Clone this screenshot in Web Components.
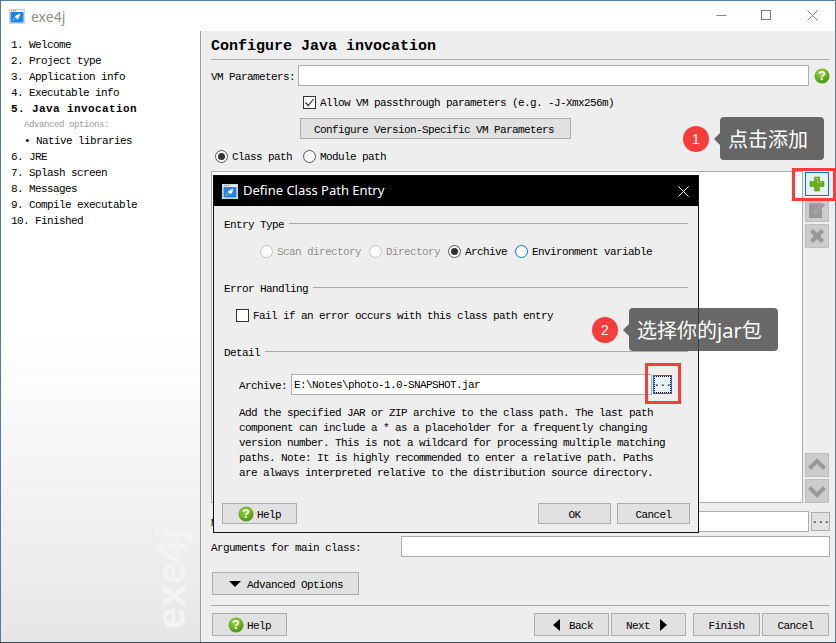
<!DOCTYPE html>
<html><head><meta charset="utf-8"><title>exe4j</title>
<style>
html,body{margin:0;padding:0;width:836px;height:643px;overflow:hidden;background:#3c4a52}
body{position:relative;font:11px/16px "Liberation Mono","Noto Sans CJK SC",monospace;letter-spacing:-.6px;color:#000}
</style></head><body>
<x-app>
  <x-titlebar slot="title">exe4j</x-titlebar>
  <x-sidebar slot="side"></x-sidebar>
  <x-config slot="main"></x-config>
</x-app>
<x-dialog></x-dialog>
<x-highlight style="left:792px;top:168px;width:44px;height:33px"></x-highlight>
<x-highlight style="left:645px;top:363px;width:36px;height:41px"></x-highlight>
<x-callout n="1" style="left:683px;top:117px;width:141px">点击添加</x-callout>
<x-callout n="2" style="left:592px;top:308px;width:186px">选择你的jar包</x-callout>
<script>
const ICONS={
 app:`<svg width="16" height="15" viewBox="0 0 16 15"><rect x=".5" y=".5" width="15" height="14" fill="#e8eef5" stroke="#cfd6dd"/><rect x="1.5" y="3" width="13" height="10.5" fill="#1c86e6"/><path d="M2 1.700h1M4 1.700h1M6 1.700h1" stroke="#e85a3c"/><path d="M11.500 4.500L7 6.500 5.500 8.500l2 .3.3 2 2-1.600z" fill="#fff"/><path d="M5.500 9.500L4 11.500" stroke="#cfe6fb"/></svg>`,
 help:`<svg width="16" height="16" viewBox="0 0 16 16"><defs><radialGradient id="g" cx=".4" cy=".3" r=".8"><stop offset="0" stop-color="#9bd13a"/><stop offset="1" stop-color="#3f8f10"/></radialGradient></defs><circle cx="8" cy="8" r="7.500" fill="url(#g)"/><text x="8" y="12.400" text-anchor="middle" font-family="Liberation Sans" font-weight="700" font-size="13" fill="#fff" style="letter-spacing:0">?</text></svg>`,
 plus:`<svg width="16" height="16" viewBox="0 0 16 16"><path d="M5.500 1h5v4.500H15v5h-4.500V15h-5v-4.500H1v-5h4.500z" fill="#6eb01e" stroke="#4f8f12" stroke-width=".6"/><path d="M6.500 2h2v4.500h5" fill="none" stroke="#9ad04a"/></svg>`,
 edit:`<svg width="18" height="18" viewBox="0 0 18 18"><rect x="1" y="2" width="13" height="15" fill="#999"/><path d="M2 1.500v2M4 1.500v2M6 1.500v2M8 1.500v2M10 1.500v2M12 1.500v2" stroke="#aaa"/><path d="M6 13l1-3 8-8 2 2-8 8z" fill="#9c9c9c" stroke="#b4b4b4" stroke-width=".7"/></svg>`,
 del:`<svg width="18" height="18" viewBox="0 0 18 18"><path d="M2.500 5L5 2.500l4 4 4-4L15.500 5l-4 4 4 4-2.500 2.500-4-4-4 4L2.500 13l4-4z" fill="#999" stroke="#8c8c8c" stroke-width=".8"/></svg>`,
 up:`<svg width="18" height="14" viewBox="0 0 18 14"><path d="M1.500 10.500L9 3l7.500 7.500" fill="none" stroke="#999" stroke-width="4"/></svg>`,
 down:`<svg width="18" height="14" viewBox="0 0 18 14"><path d="M1.500 3.500L9 11l7.500-7.500" fill="none" stroke="#999" stroke-width="4"/></svg>`,
 tri:`<svg width="12" height="6" viewBox="0 0 12 6"><path d="M0 0h12L6 6z" fill="#000"/></svg>`,
 left:`<svg width="7" height="12" viewBox="0 0 7 12"><path d="M7 0v12L0 6z" fill="#000"/></svg>`,
 right:`<svg width="7" height="12" viewBox="0 0 7 12"><path d="M0 0v12l7-6z" fill="#000"/></svg>`
};
function def(name,css,html,init){
  const t=document.createElement('template');
  t.innerHTML=`<style>${css}</style>${html}`;
  customElements.define(name,class extends HTMLElement{
    connectedCallback(){
      if(this.shadowRoot)return;
      this.attachShadow({mode:'open'}).appendChild(t.content.cloneNode(true));
      if(init)init.call(this,this.shadowRoot);
    }
  });
}
def('x-app',`:host{display:block;box-sizing:border-box;width:836px;height:642px;border:1px solid #5b7a93;border-width:1px 1px 0 1px;background:#fff}
.w{display:grid;grid-template:30px 1fr/200px 1fr;height:100%}
.t{grid-column:1/3}`,
`<div class="w"><div class="t"><slot name="title"></slot></div><slot name="side"></slot><slot name="main"></slot></div>`);
def('x-icon',`:host{display:inline-flex;flex:none;line-height:0}`,``,function(s){s.innerHTML+=ICONS[this.getAttribute('name')]});
def('x-titlebar',`:host{display:flex;align-items:center;height:30px;background:#fff;color:#8d8d8d;font:14px "Noto Sans",sans-serif;letter-spacing:0}
.i{margin:0 6px 0 8px;display:flex}
.c{margin-left:auto;height:30px}
svg{display:block}`,
`<span class="i"><x-icon name="app"></x-icon></span><slot></slot>
<svg class="c" width="120" height="30" viewBox="714 0 120 30"><path d="M715.500 14.500h10" stroke="#8a8a8a" fill="none"/><rect x="760.500" y="9.500" width="9" height="9" fill="none" stroke="#777"/><path d="M806.500 9.500l10 10M816.500 9.500l-10 10" stroke="#8a8a8a" fill="none"/></svg>`);
def('x-sidebar',`:host{display:block;box-sizing:border-box;position:relative;overflow:hidden;border-right:1px solid #a0a0a0;padding:6px 0 0 10px;
background:linear-gradient(#fff 0,#fff 50%,#e6e6e6 100%)}
div{height:16px;white-space:pre}
.b{font-weight:700;letter-spacing:.4px}
.a{font-size:9px;letter-spacing:-.4px;color:#999;padding-left:13px}
.n{padding-left:13px}
.w{position:absolute;transform:rotate(-90deg);transform-origin:0 0;height:auto;font:700 40px/40px "Liberation Sans",sans-serif;letter-spacing:0;color:#f3f3f3;left:150px;top:598px}`,
`<div>1. Welcome</div><div>2. Project type</div><div>3. Application info</div><div>4. Executable info</div>
<div class="b">5. Java invocation</div><div class="a">Advanced options:</div><div class="n">• Native libraries</div>
<div>6. JRE</div><div>7. Splash screen</div><div>8. Messages</div><div>9. Compile executable</div><div>10. Finished</div>
<div class="w">exe4j</div>`);
def('x-btn',`:host{display:inline-flex;box-sizing:border-box;align-items:center;justify-content:center;gap:4px;height:23px;background:#e1e1e1;border:1px solid #adadad;flex:none;white-space:pre;padding-top:2px}
::slotted(x-icon){margin-top:-2px}
:host(.dots){padding:0 0 4px}`,`<slot></slot>`);
def('x-input',`:host{display:block;box-sizing:border-box;height:21px;background:#fff;border:1px solid #adadad;padding:0 0 0 2px;line-height:21px;min-width:0;white-space:pre;overflow:hidden}`,`<slot></slot>`);
def('x-radio',`:host{display:inline-flex;align-items:center;gap:4px;height:16px;white-space:pre}
i{box-sizing:border-box;width:13px;height:13px;border-radius:50%;border:1.500px solid #555;background:#fff;display:flex;align-items:center;justify-content:center;flex:none}
:host([on]) i::after{content:"";width:7px;height:7px;border-radius:50%;background:#333}
:host([off]){color:#8f8f8f}
:host([off]) i{border-color:#c4c4c4}
:host([focus]) i{border-color:#0078d7}
span{padding-top:2px}`,`<i></i><span><slot></slot></span>`);
def('x-check',`:host{display:inline-flex;align-items:center;gap:4px;height:16px;white-space:pre}
i{box-sizing:border-box;width:13px;height:13px;border:1px solid #333;background:#fff;display:block;flex:none;line-height:0}
svg{display:none}
:host([on]) svg{display:block}
span{padding-top:2px}`,`<i><svg width="11" height="11" viewBox="0 0 11 11"><path d="M1.500 5.500L4.300 8.500 9.500 2" fill="none" stroke="#333" stroke-width="1.200"/></svg></i><span><slot></slot></span>`);
def('x-legend',`:host{display:flex;align-items:center;gap:5px;height:16px;white-space:pre}
i{flex:1;height:0;border-top:1px solid #aaa;margin-top:-2px}
span{padding-top:2px}`,`<span><slot></slot></span><i></i>`);
def('x-config',`:host{display:block;background:#eee;padding:0 5px 0 10px;overflow:hidden}
h1{margin:0;font:700 15px/20px "Liberation Mono",monospace;letter-spacing:0;padding:6px 0 2px;border-bottom:1px solid #aaa}
.r{display:flex;align-items:center;white-space:pre}
.r>span{padding-top:2px}
.vm{margin-top:5px;height:21px}.vm span{width:88px}.vm x-input{flex:none;width:511px}.vm x-icon{margin-left:5px}
.ck{margin-top:8px;padding-left:92px;height:16px}
.cv{margin:8px 0 0 89px;width:271px;height:21px;display:flex}
.cv x-btn{width:100%;height:21px;padding-right:3px}
.rd{margin-top:9px;padding-left:4px;height:16px;gap:0}.rd x-radio+x-radio{margin-left:11px}
.ls{display:flex;margin-top:7px;height:332px}
.bx{width:592px;box-sizing:border-box;background:#fff;border:1px solid #adadad}
.cl{margin-left:2px;width:24px;padding-top:1px;display:flex;flex-direction:column;gap:2px}
.cl x-btn{width:24px;height:24px;background:#ccc;border-color:#bdbdbd}
.cl .p{background:#e5f1fb;border-color:#0078d7}
.cl .u{margin-top:auto}
.mn{margin-top:8px;height:21px}.mn span{width:2px;overflow:hidden;margin-right:188px}.ar span{width:190px}.mn x-input{width:408px;flex:none}.mn x-btn{width:19px;height:19px;margin-left:2px}
.ar{margin-top:4px;height:21px}.ar x-input{flex:1}
.ad{display:flex;margin:15px 0 0 1px;width:147px}
.ad x-btn{width:147px;justify-content:flex-start;padding-left:16px;gap:6px}
hr{margin:10px 0 0;border:0;border-top:1px solid #aaa}
.ft{display:flex;margin:7px 0 0 1px;height:23px}
.ft .h{width:75px;justify-content:flex-start;padding-left:15px;gap:3px}
.ft .b{width:75px;justify-content:flex-start}
.ft .b1{margin-left:auto;gap:9px;padding-left:18px}.ft .n{margin-left:2px;gap:10px;padding-left:14px}
.ft .f{width:67px;margin-left:2px}.ft .f1{margin-left:7px}.ft .e{margin-right:1px}`,
`<h1>Configure Java invocation</h1>
<div class="r vm"><span>VM Parameters:</span><x-input></x-input><x-icon name="help"></x-icon></div>
<div class="r ck"><x-check on>Allow VM passthrough parameters (e.g. -J-Xmx256m)</x-check></div>
<div class="cv"><x-btn>Configure Version-Specific VM Parameters</x-btn></div>
<div class="r rd"><x-radio on>Class path</x-radio><x-radio>Module path</x-radio></div>
<div class="ls"><div class="bx"></div><div class="cl">
<x-btn class="p"><x-icon name="plus"></x-icon></x-btn><x-btn><x-icon name="edit"></x-icon></x-btn><x-btn><x-icon name="del"></x-icon></x-btn>
<x-btn class="u"><x-icon name="up"></x-icon></x-btn><x-btn><x-icon name="down"></x-icon></x-btn></div></div>
<div class="r mn"><span>M</span><x-input></x-input><x-btn class="dots">...</x-btn></div>
<div class="r ar"><span>Arguments for main class:</span><x-input></x-input></div>
<div class="ad"><x-btn><x-icon name="tri"></x-icon>Advanced Options</x-btn></div>
<hr>
<div class="ft"><x-btn class="h"><x-icon name="help"></x-icon>Help</x-btn>
<x-btn class="b b1"><x-icon name="left"></x-icon>Back</x-btn><x-btn class="b n">Next<x-icon name="right"></x-icon></x-btn>
<x-btn class="f f1">Finish</x-btn><x-btn class="f e">Cancel</x-btn></div>`);
def('x-dialog',`:host{position:absolute;left:213px;top:175px;width:486px;height:358px;box-sizing:border-box;border:1px solid #111;background:#eee;display:block}
.t{display:flex;align-items:center;height:30px;background:#000;color:#fff;font:13px "Noto Sans",sans-serif;letter-spacing:0;padding-left:8px;gap:5px}
.t span{padding-bottom:2px}
.t svg.x{margin-left:auto;margin-right:9px}
.b{padding:10px 10px 0}
.ro{margin:11px 0 0 36px;display:flex;height:16px}
.ro x-radio+x-radio{margin-left:8px}
.l2{margin-top:21px}
.ck{margin:11px 0 0 12px;height:16px;display:flex}
.ar{display:flex;align-items:center;margin:14px 0 0 15px;height:21px;white-space:pre}
.ar span{width:52px;padding-top:2px}.ar x-input{width:361px;flex:none}
.ar x-btn{width:19px;height:19px;margin-left:1px;background:#e5f1fb;border-color:#0078d7;outline:1px dotted #000;outline-offset:-2px}
.d{margin:11px 0 0 15px;height:71px;overflow:hidden;line-height:15px;white-space:pre}
.f{display:flex;margin:26px -2px 0;height:21px}
.f x-btn{height:21px;width:73px}.f .h{width:75px;margin-right:auto;justify-content:flex-start;padding-left:15px;gap:3px}.f .c{margin-left:6px}`,
`<div class="t"><x-icon name="app"></x-icon><span>Define Class Path Entry</span><svg class="x" width="11" height="11" viewBox="0 0 11 11"><path d="M.5.5l10 10M10.500.5l-10 10" stroke="#fff" fill="none"/></svg></div>
<div class="b">
<x-legend>Entry Type</x-legend>
<div class="ro"><x-radio off>Scan directory</x-radio><x-radio off>Directory</x-radio><x-radio on>Archive</x-radio><x-radio focus>Environment variable</x-radio></div>
<x-legend class="l2">Error Handling</x-legend>
<div class="ck"><x-check>Fail if an error occurs with this class path entry</x-check></div>
<x-legend class="l2">Detail</x-legend>
<div class="ar"><span>Archive:</span><x-input>E:\\Notes\\photo-1.0-SNAPSHOT.jar</x-input><x-btn class="dots">...</x-btn></div>
<div class="d">Add the specified JAR or ZIP archive to the class path. The last path
component can include a * as a placeholder for a frequently changing
version number. This is not a wildcard for processing multiple matching
paths. Note: It is highly recommended to enter a relative path. Paths
are always interpreted relative to the distribution source directory.</div>
<div class="f"><x-btn class="h"><x-icon name="help"></x-icon>Help</x-btn><x-btn>OK</x-btn><x-btn class="c">Cancel</x-btn></div>
</div>`);
def('x-highlight',`:host{position:absolute;box-sizing:border-box;border:3px solid #f93c3c;display:block}`,``);
def('x-callout',`:host{position:absolute;display:flex;align-items:center;height:43px;font:20px/45px "Noto Sans","Noto Sans CJK SC",sans-serif;letter-spacing:0;color:#fff}
b{flex:none;width:26px;height:26px;border-radius:50%;background:#f93c3c;font:400 14px/26px "Liberation Sans",sans-serif;text-align:center}
i{flex:none;width:0;height:0;margin-left:5px;border:6px solid transparent;border-left:0;border-right-color:rgba(68,68,68,.8)}
span{flex:1;height:43px;box-sizing:border-box;border-radius:4px;background:rgba(68,68,68,.8);padding-left:8px;white-space:pre}`,
`<b></b><i></i><span><slot></slot></span>`,function(s){s.querySelector('b').textContent=this.getAttribute('n')});
</script>
</body></html>
